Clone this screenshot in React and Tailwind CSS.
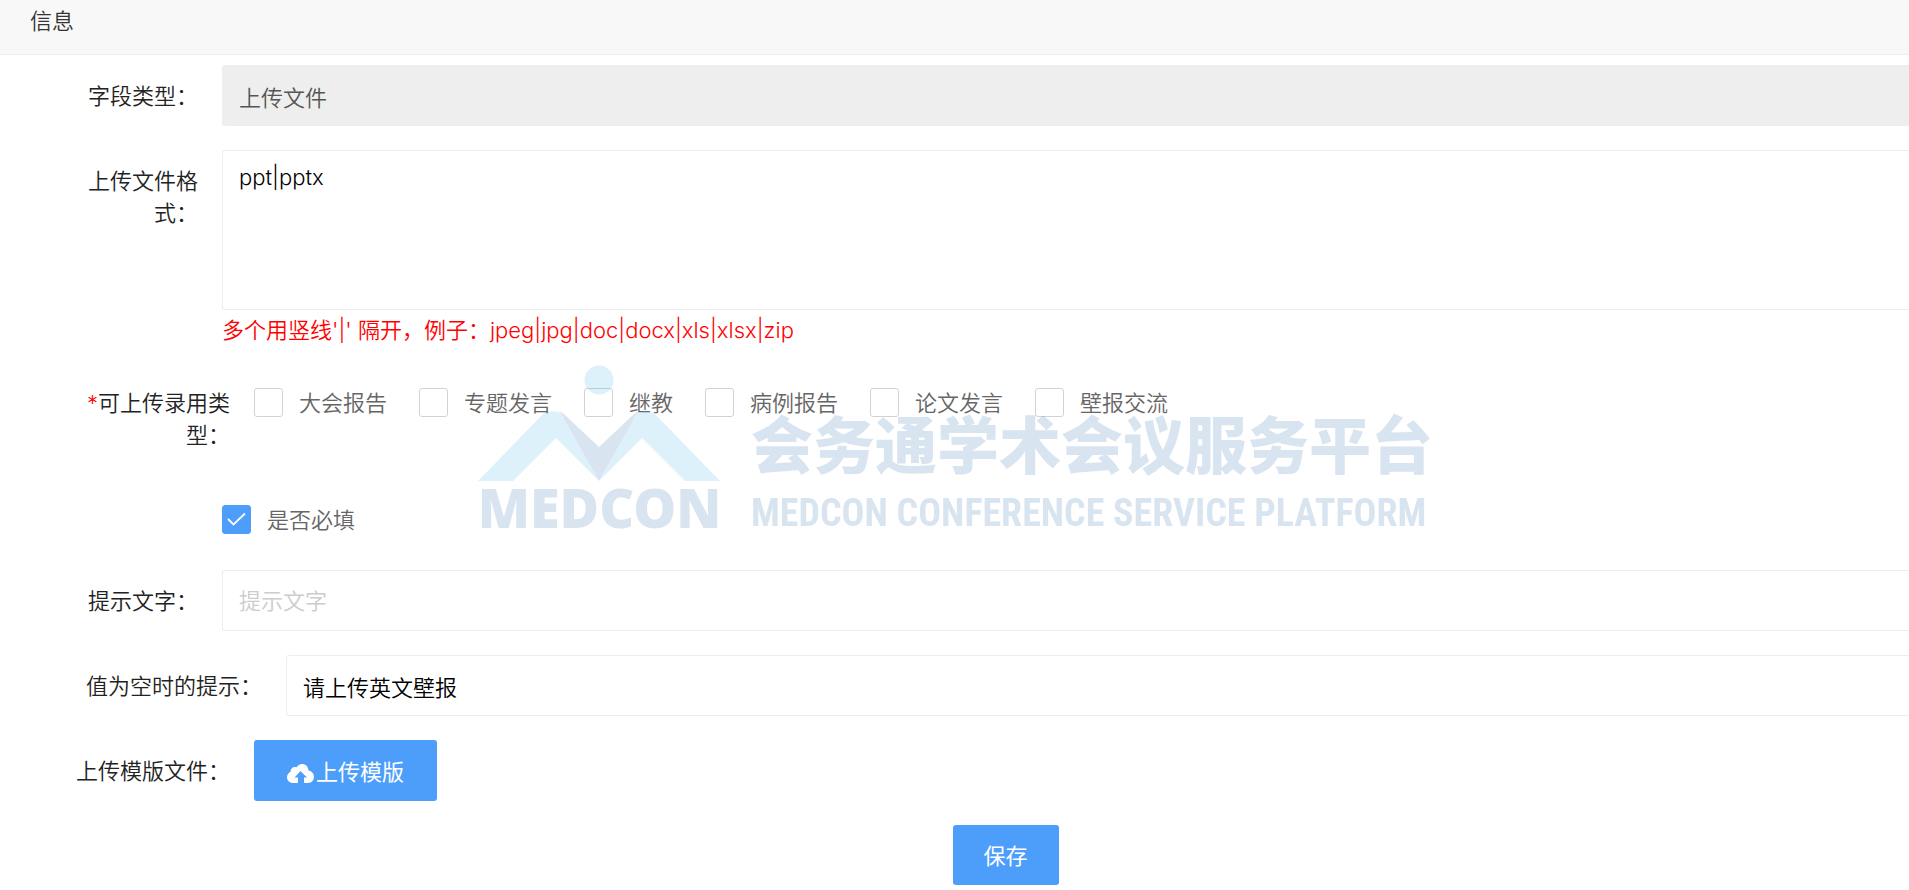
import React, { useState } from "react";

const uploadTypes = ["大会报告", "专题发言", "继教", "病例报告", "论文发言", "壁报交流"];

const labelStyle = "shrink-0 pl-[68px] pt-[15px] text-right text-[#222]";
const inputStyle =
  "h-[61px] min-w-0 flex-1 rounded-l-[3px] border border-r-0 border-[#eee] px-4 focus:outline-none placeholder:text-[#ccc]";

const CheckBox = ({ id, label, checked, onChange }) => (
  <label htmlFor={id} className="flex cursor-pointer items-center gap-4 leading-7">
    <span className="relative block size-[29px]">
      <input
        id={id}
        type="checkbox"
        checked={checked}
        onChange={onChange}
        className="peer block size-[29px] appearance-none rounded-[3px] border border-[#d2d2d2] bg-white checked:border-[#4d9efa] checked:bg-[#4d9efa]"
      />
      <svg
        viewBox="0 0 29 29"
        className="pointer-events-none absolute inset-0 hidden fill-none stroke-white peer-checked:block"
        strokeWidth="1.8"
      >
        <path d="M6 14l5.500 5.500L23 8.500" />
      </svg>
    </span>
    <span className="text-[#666]">{label}</span>
  </label>
);

const CloudUpload = () => (
  <svg viewBox="0 0 27 19" className="mt-1 h-[19px] w-[27px] fill-white">
    <path d="M11 19H6.200C2.700 19 0 16.500 0 13.200 0 10.700 1.500 8.600 3.500 7.700 3.500 5 5.500 3 8 3c.6 0 1.100.1 1.600.3C10.700 1.300 12.700 0 15 0c3.600 0 6.300 2.700 6.500 6.500C24.600 7 27 9.600 27 12.800 27 16.300 24.500 19 21 19h-4v-5.500h3L13.500 7 7.500 13.500H11z" />
  </svg>
);

const Watermark = () => (
  <div className="pointer-events-none fixed inset-0 flex items-center justify-center gap-7 whitespace-nowrap text-[#4078b8] opacity-20">
    <div className="flex w-[247px] flex-col items-center pt-0.5">
      <svg viewBox="0 0 242 116" className="h-[116px] w-[242px]">
        <g fill="#55b9eb">
          <circle cx="121" cy="15" r="14.500" />
          <path d="M0 116L65 49c3-3 14-4 18 0l38 67-43-43-43 43z" />
          <path d="M242 116L177 49c-3-3-14-4-18 0l-38 67 43-43 43 43z" />
        </g>
        <path d="M80 46c4 1 6 3 8 5l33 31 33-31c2-2 4-4 8-5-4 3-5 6-7 10l-34 60-34-60c-2-4-3-7-7-10z" fill="#4078b8" />
      </svg>
      <span className="pt-1.5 font-['Noto_Sans',sans-serif] text-[54px] leading-10 font-black">MEDCON</span>
    </div>
    <div className="flex flex-col pt-16">
      <span className="text-[62px] leading-[72px] font-black">会务通学术会议服务平台</span>
      <span className="font-['Roboto_Condensed',Roboto,sans-serif] text-[38px] leading-[60px] font-bold">
        MEDCON CONFERENCE SERVICE PLATFORM
      </span>
    </div>
  </div>
);

const App = () => {
  const [form, setForm] = useState({
    formats: "ppt|pptx",
    types: [],
    required: true,
    placeholder: "",
    emptyTip: "请上传英文壁报",
  });

  const handleChange = (e) => {
    setForm({ ...form, [e.target.name]: e.target.value });
  };

  const toggleType = (type) => {
    const types = form.types.includes(type)
      ? form.types.filter((t) => t !== type)
      : [...form.types, type];
    setForm({ ...form, types });
  };

  return (
    <div className="min-h-screen bg-white font-['Inter','Noto_Sans_CJK_SC',sans-serif] text-[22px] leading-8">
      <header className="h-[55px] border-b border-[#eee] bg-[#f8f8f8] px-[30px] pt-[5px]">
        <h1 className="font-[350] text-[#333]">信息</h1>
      </header>

      <form className="flex flex-col gap-6 pt-[10px] font-[350]" onSubmit={(e) => e.preventDefault()}>
        <div className="flex gap-6">
          <label htmlFor="fieldType" className={`${labelStyle} w-[198px]`}>字段类型：</label>
          <input id="fieldType" value="上传文件" disabled className={`${inputStyle} bg-[#eee] text-[#555]`} />
        </div>

        {/* allowed formats */}
        <div className="flex gap-6">
          <label htmlFor="formats" className={`${labelStyle} w-[198px]`}>上传文件格式：</label>
          <div className="flex-1">
            <textarea
              id="formats"
              name="formats"
              value={form.formats}
              onChange={handleChange}
              className="block h-40 w-full resize-none rounded-l-[3px] border border-r-0 border-[#eee] px-4 py-[10px] text-black focus:outline-none"
            />
            <p className="pt-1 pb-0.5 text-[#f00]">
              多个用竖线'|' 隔开，例子：jpeg|jpg|doc|docx|xls|xlsx|zip
            </p>
          </div>
        </div>

        <fieldset className="flex gap-6 pb-[15px]">
          <span className={`${labelStyle} w-[230px]`}>
            <span className="text-[#f00]">*</span>可上传录用类型：
          </span>
          <div className="flex flex-wrap items-start gap-x-8 pt-4">
            {uploadTypes.map((type, i) => (
              <CheckBox
                key={type}
                id={`type${i}`}
                label={type}
                checked={form.types.includes(type)}
                onChange={() => toggleType(type)}
              />
            ))}
          </div>
        </fieldset>

        <div className="h-14 pt-[15px] pl-[222px]">
          <CheckBox
            id="required"
            label="是否必填"
            checked={form.required}
            onChange={(e) => setForm({ ...form, required: e.target.checked })}
          />
        </div>

        <div className="flex gap-6">
          <label htmlFor="placeholder" className={`${labelStyle} w-[198px]`}>提示文字：</label>
          <input
            id="placeholder"
            name="placeholder"
            placeholder="提示文字"
            value={form.placeholder}
            onChange={handleChange}
            className={inputStyle}
          />
        </div>

        <div className="flex gap-6">
          <label htmlFor="emptyTip" className={`${labelStyle} w-[262px]`}>值为空时的提示：</label>
          <input
            id="emptyTip"
            name="emptyTip"
            value={form.emptyTip}
            onChange={handleChange}
            className={`${inputStyle} text-black`}
          />
        </div>

        {/* template upload */}
        <div className="flex gap-6">
          <span className={`${labelStyle} w-[230px]`}>上传模版文件：</span>
          <button type="button" className="flex h-[61px] w-[183px] items-center justify-center gap-[2px] rounded-[3px] bg-[#4d9efa] pt-0.5 font-normal text-white">
            <CloudUpload />
            上传模版
          </button>
        </div>

        <div className="flex justify-center pl-[102px]">
          <button type="submit" className="h-[60px] w-[106px] rounded-[3px] bg-[#4d9efa] pt-0.5 font-normal text-white">
            保存
          </button>
        </div>
      </form>

      <Watermark />
    </div>
  );
};

export default App;
